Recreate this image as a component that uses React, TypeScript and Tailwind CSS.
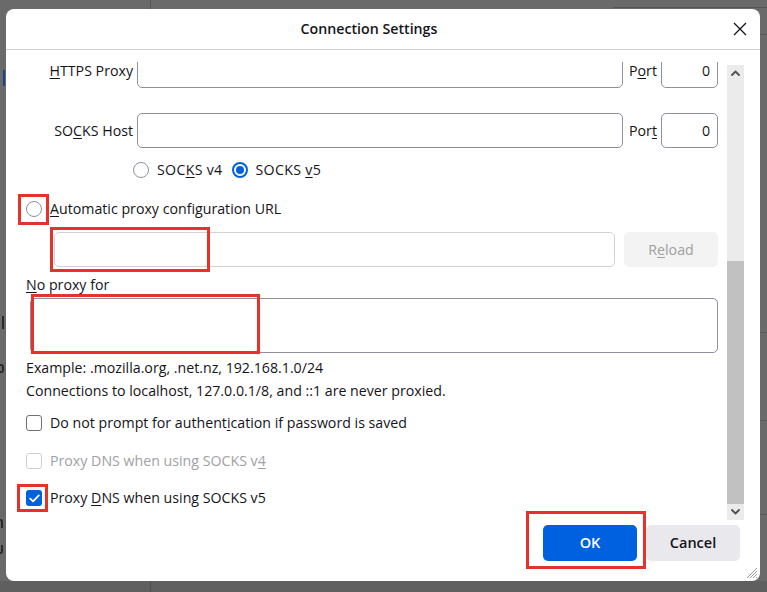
import type { ReactNode } from "react";

const FONT = "font-['Open_Sans','Noto_Sans',sans-serif]";

function Radio({ checked = false }: { checked?: boolean }) {
  if (checked) {
    return (
      <span className="flex h-4 w-4 shrink-0 items-center justify-center rounded-full border-2 border-[#0061e0] bg-white">
        <span className="h-2 w-2 rounded-full bg-[#0061e0]" />
      </span>
    );
  }
  return <span className="h-4 w-4 shrink-0 rounded-full border border-[#8f8f9d] bg-white" />;
}

function Checkbox({ checked = false, disabled = false }: { checked?: boolean; disabled?: boolean }) {
  if (checked) {
    return (
      <span className="flex h-4 w-4 shrink-0 items-center justify-center rounded-[3px] bg-[#0061e0]">
        <svg width="11" height="9" viewBox="0 0 11 9" fill="none">
          <path d="M1.2 4.6 L4.1 7.4 L9.8 1.4" stroke="white" strokeWidth="1.8" strokeLinecap="round" strokeLinejoin="round" />
        </svg>
      </span>
    );
  }
  return (
    <span
      className={`h-4 w-4 shrink-0 rounded-[3px] border bg-white ${
        disabled ? "border-[#cfcfd8]" : "border-[#6f6f7a]"
      }`}
    />
  );
}

function ProxyRow({ label, port, className }: { label: ReactNode; port: ReactNode; className?: string }) {
  return (
    <div className={`flex h-[35px] items-center pr-[9px] leading-4 ${className ?? ""}`}>
      <div className="w-[127px] text-right">{label}</div>
      <div className="ml-[4px] h-full flex-1 rounded-[5px] border border-[#8f8f9d] bg-white" />
      <div className="ml-[6px] w-[27px]">{port}</div>
      <div className="ml-[5px] flex h-full w-[57px] items-center justify-end rounded-[5px] border border-[#8f8f9d] bg-white pr-[7px]">
        0
      </div>
    </div>
  );
}

function Chevron({ up }: { up?: boolean }) {
  return (
    <svg width="9" height="6" viewBox="0 0 9 6" fill="none">
      <path
        d={up ? "M1 5 L4.5 1.5 L8 5" : "M1 1 L4.5 4.5 L8 1"}
        stroke="#505050"
        strokeWidth="1.8"
        strokeLinecap="round"
        strokeLinejoin="round"
      />
    </svg>
  );
}

function RedBox({ className }: { className: string }) {
  return <div className={`pointer-events-none absolute border-[3px] border-[#e5322d] ${className}`} />;
}

export default function App() {
  return (
    <div className={`relative flex h-[592px] w-[767px] flex-col overflow-hidden bg-[#6a6a6a] text-[14.2px] text-[#15141a] ${FONT}`}>
      {/* dimmed page behind the dialog */}
      <div className="absolute left-[150px] top-0 h-[9px] w-px bg-[#555]" />
      <div className="absolute left-[150px] bottom-0 h-[11px] w-px bg-[#4e4e4e]" />
      <div className="absolute left-[613px] top-[7px] h-px w-[154px] bg-[#555]" />
      <div className="absolute right-0 top-[34px] h-px w-[7px] bg-[#5a5a5a]" />
      <div className="absolute right-0 top-[332px] h-px w-[7px] bg-[#5a5a5a]" />
      <div className="absolute right-0 top-[420px] h-px w-[7px] bg-[#5a5a5a]" />
      <div className="absolute right-0 top-[514px] h-px w-[7px] bg-[#5a5a5a]" />
      <div className="absolute left-[3px] top-[70px] h-[16px] w-[2px] bg-[#1e3f8f]" />
      <div className="absolute left-[2px] top-[316px] h-[13px] w-[2px] bg-[#2a2a2a]" />
      <div className="absolute left-0 top-[364px] h-[9px] w-[4px] rounded-r-[3px] border-2 border-l-0 border-[#2a2a2a]" />
      <div className="absolute left-0 top-[519px] h-[9px] w-[3px] rounded-tr-[3px] border-r-2 border-t-2 border-[#2a2a2a]" />
      <div className="absolute left-0 top-[545px] h-[9px] w-[3px] rounded-br-[3px] border-b-2 border-r-2 border-[#2a2a2a]" />

      <div className="h-[9px] shrink-0" />
      <div className="relative ml-[6px] flex h-[572px] w-[754px] shrink-0 flex-col overflow-hidden rounded-[8px] bg-white">
        {/* header */}
        <div className="flex h-[41px] shrink-0 items-center border-b border-[#d0d0d0] pl-[4px] pr-[8px]">
          <div className="flex-1 text-center text-[14.2px] font-semibold">Connection Settings</div>
          <button className="flex h-6 w-6 items-center justify-center">
            <svg width="14" height="14" viewBox="0 0 14 14">
              <path d="M1 1 L13 13 M13 1 L1 13" stroke="#15141a" strokeWidth="1.3" />
            </svg>
          </button>
        </div>

        {/* body */}
        <div className="flex flex-1 flex-col pt-[12px]">
          <div className="flex h-[458px] shrink-0">
            <div className="h-full flex-1 overflow-hidden">
              <div className="-mt-[9px] flex flex-col">
                <ProxyRow
                  label={
                    <>
                      <u className="underline-offset-2">H</u>TTPS Proxy
                    </>
                  }
                  port={
                    <>
                      P<u className="underline-offset-2">o</u>rt
                    </>
                  }
                />
                <ProxyRow
                  className="mt-[25px]"
                  label={
                    <>
                      SO<u className="underline-offset-2">C</u>KS Host
                    </>
                  }
                  port={
                    <>
                      Por<u className="underline-offset-2">t</u>
                    </>
                  }
                />
                <div className="mt-[10px] flex h-[24px] items-center pl-[127px]">
                  <Radio />
                  <span className="ml-[8px] tracking-[0.3px]">
                    SOC<u className="underline-offset-2">K</u>S v4
                  </span>
                  <span className="ml-[9px]">
                    <Radio checked />
                  </span>
                  <span className="ml-[8px] tracking-[0.3px]">
                    SOCKS <u className="underline-offset-2">v</u>5
                  </span>
                </div>
                <div className="mt-[15px] flex h-[24px] items-center pl-[20px]">
                  <Radio />
                  <span className="ml-[8px]">
                    <u className="underline-offset-2">A</u>utomatic proxy configuration URL
                  </span>
                </div>
                <div className="mt-[11px] flex h-[35px] pl-[48px] pr-[9px]">
                  <div className="h-full flex-1 rounded-[5px] border border-[#d2d2d6] bg-white" />
                  <div className="ml-[9px] flex h-full w-[94px] items-center justify-center rounded-[5px] bg-[#f3f3f3] text-[#a0a0a0]">
                    R<u className="underline-offset-2">e</u>load
                  </div>
                </div>
                <div className="mt-[8px] flex h-[20px] items-center pl-[20px]">
                  <span>
                    <u className="underline-offset-2">N</u>o proxy for
                  </span>
                </div>
                <div className="mt-[3px] flex h-[55px] pl-[24px] pr-[9px]">
                  <div className="h-full flex-1 rounded-[5px] border border-[#8f8f9d] bg-white" />
                </div>
                <div className="mt-[4px] flex h-[22px] items-center pl-[20px]">
                  Example: .mozilla.org, .net.nz, 192.168.1.0/24
                </div>
                <div className="mt-[1px] flex h-[22px] items-center pl-[20px]">
                  Connections to localhost, 127.0.0.1/8, and ::1 are never proxied.
                </div>
                <div className="mt-[9px] flex h-[24px] items-center pl-[20px]">
                  <Checkbox />
                  <span className="ml-[8px]">
                    Do not prompt for authent<u className="underline-offset-2">i</u>cation if password is saved
                  </span>
                </div>
                <div className="mt-[14px] flex h-[24px] items-center pl-[20px] text-[#a0a0a6]">
                  <Checkbox disabled />
                  <span className="ml-[8px]">
                    Proxy DNS when using SOCKS v<u className="underline-offset-2">4</u>
                  </span>
                </div>
                <div className="mt-[13px] flex h-[24px] items-center pl-[20px]">
                  <Checkbox checked />
                  <span className="ml-[8px]">
                    Proxy <u className="underline-offset-2">D</u>NS when using SOCKS v5
                  </span>
                </div>
              </div>
            </div>

            {/* scrollbar */}
            <div className="mt-[3px] flex h-[455px] w-[17px] flex-col bg-[#ebebeb]">
              <div className="flex h-[16px] items-center justify-center">
                <Chevron up />
              </div>
              <div className="flex flex-1 flex-col">
                <div className="h-[180px]" />
                <div className="flex-1 bg-[#c1c1c1]" />
              </div>
              <div className="flex h-[16px] items-center justify-center">
                <Chevron />
              </div>
            </div>
            <div className="w-[16px]" />
          </div>

          {/* buttons */}
          <div className="mt-[5px] flex h-[36px] justify-end gap-[9px] pr-[20px]">
            <button className="w-[94px] rounded-[5px] bg-[#0061e0] text-[14.5px] font-semibold text-white">OK</button>
            <button className="w-[94px] rounded-[5px] bg-[#e9e9ed] text-[14.5px] font-semibold text-[#15141a]">
              Cancel
            </button>
          </div>
        </div>

        {/* resize grip */}
        <svg className="absolute bottom-[2px] right-[2px]" width="13" height="13" viewBox="0 0 13 13">
          <path d="M12 2 L2 12 M12 5 L5 12 M12 8 L8 12 M12 11 L11 12" stroke="#9a9a9a" strokeWidth="1" />
        </svg>
      </div>
      <div className="flex-1 bg-[#5f5f5f]" />

      {/* annotation boxes */}
      <RedBox className="left-[18px] top-[194px] h-[31px] w-[31px]" />
      <RedBox className="left-[50px] top-[227px] h-[45px] w-[160px]" />
      <RedBox className="left-[31px] top-[294px] h-[60px] w-[229px]" />
      <RedBox className="left-[17px] top-[484px] h-[28px] w-[31px]" />
      <RedBox className="left-[526px] top-[511px] h-[58px] w-[120px]" />
    </div>
  );
}
